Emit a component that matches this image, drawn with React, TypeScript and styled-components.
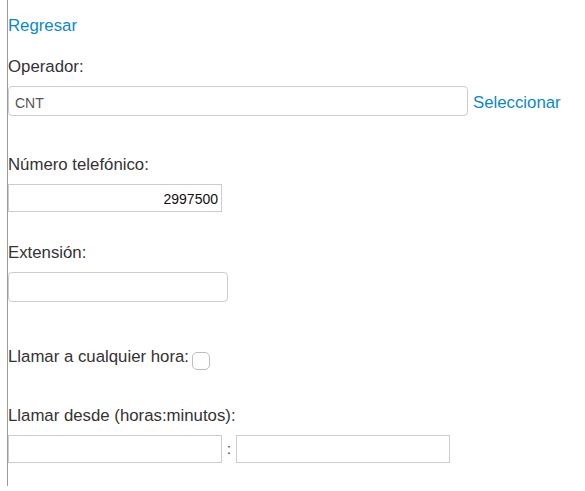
import React, { useState } from 'react';
import styled, { createGlobalStyle } from 'styled-components';

const GlobalStyle = createGlobalStyle`
  html, body {
    margin: 0;
    padding: 0;
    background: #fff;
  }
  body {
    font-family: "Liberation Sans", Arial, Helvetica, sans-serif;
  }
`;

const Page = styled.div`
  margin-left: 7px;
  border-left: 1px solid #9a9a9a;
  height: 486px;
  padding-top: 16px;
  box-sizing: border-box;
`;

const Link = styled.a`
  color: #0a88cc;
  font-size: 16.8px;
  line-height: 20px;
  text-decoration: none;
  cursor: pointer;
`;

const BackRow = styled.div`
  height: 20px;
  margin-bottom: 20px;
`;

const Field = styled.div<{ gap: number }>`
  margin-bottom: ${p => p.gap}px;
`;

const Label = styled.label`
  display: block;
  color: #333;
  font-size: 16.8px;
  line-height: 20px;
  padding-top: 1px;
  margin-bottom: 9px;
`;

const InlineLabel = styled.label`
  display: flex;
  align-items: center;
  color: #333;
  font-size: 16.8px;
  line-height: 20px;
  height: 20px;
  padding-top: 1px;
`;

const Row = styled.div`
  display: flex;
  align-items: baseline;
  gap: 5px;
`;

const TimeRow = styled.div`
  display: flex;
  align-items: center;
`;

const TextInput = styled.input<{ w: number; square?: boolean; right?: boolean }>`
  box-sizing: border-box;
  width: ${p => p.w}px;
  height: ${p => (p.square ? 28 : 30)}px;
  padding: ${p => (p.square ? '1px 3px 0' : '3px 6px 0')};
  border: 1px solid #cccccc;
  border-radius: ${p => (p.square ? 0 : 4)}px;
  font-family: "Liberation Sans", Arial, sans-serif;
  font-size: 14px;
  color: ${p => (p.square ? '#111' : '#555')};
  text-align: ${p => (p.right ? 'right' : 'left')};
  background: #fff;
  margin: 0;
  outline: none;
`;

const Colon = styled.span`
  width: 14px;
  text-align: center;
  font-size: 14px;
  color: #333;
`;

const Check = styled.input`
  appearance: none;
  width: 18px;
  height: 18px;
  margin: 8px 0 0 3px;
  border: 1px solid #bdbdbd;
  border-radius: 5px;
  background: #fff;
  cursor: pointer;

  &:checked {
    background: #0a88cc;
    border-color: #0a88cc;
  }
`;

export default function App() {
  const [anyTime, setAnyTime] = useState(false);

  return (
    <>
      <GlobalStyle />
      <Page>
        <BackRow>
          <Link>Regresar</Link>
        </BackRow>

        <Field gap={38}>
          <Label>Operador:</Label>
          <Row>
            <TextInput w={460} defaultValue="CNT" readOnly />
            <Link>Seleccionar</Link>
          </Row>
        </Field>

        <Field gap={30}>
          <Label>Número telefónico:</Label>
          <TextInput w={214} square right defaultValue="2997500" />
        </Field>

        <Field gap={44}>
          <Label>Extensión:</Label>
          <TextInput w={220} />
        </Field>

        <Field gap={38}>
          <InlineLabel>
            Llamar a cualquier hora:
            <Check
              type="checkbox"
              checked={anyTime}
              onChange={e => setAnyTime(e.target.checked)}
            />
          </InlineLabel>
        </Field>

        <Field gap={0}>
          <Label>Llamar desde (horas:minutos):</Label>
          <TimeRow>
            <TextInput w={214} square />
            <Colon>:</Colon>
            <TextInput w={214} square />
          </TimeRow>
        </Field>
      </Page>
    </>
  );
}
